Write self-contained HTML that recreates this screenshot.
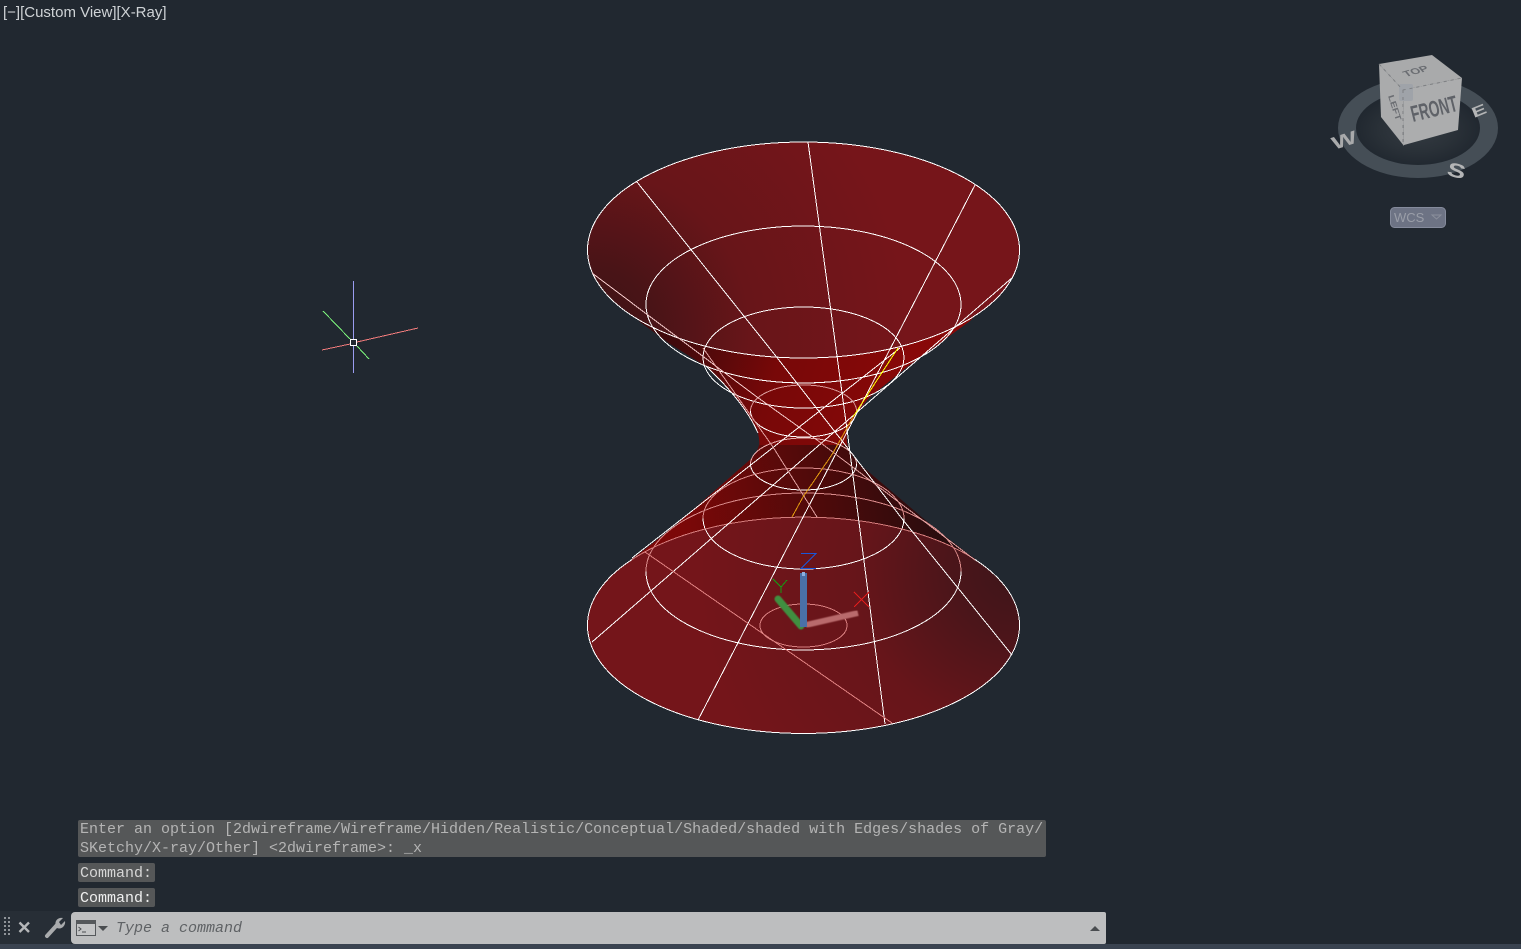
<!DOCTYPE html>
<html><head><meta charset="utf-8"><style>
html,body{margin:0;padding:0;width:1521px;height:949px;overflow:hidden;background:#212830}
.abs{position:absolute}
.m{font-family:"Liberation Mono",monospace;font-size:15px;line-height:19px;white-space:pre}
</style></head><body>
<svg class="abs" style="left:0;top:0" width="1521" height="949" viewBox="0 0 1521 949" xmlns="http://www.w3.org/2000/svg">
<defs>
<radialGradient id="top" gradientUnits="userSpaceOnUse" cx="590" cy="330" r="320"><stop offset="0" stop-color="#3c1215"/><stop offset=".2" stop-color="#491417"/><stop offset=".5" stop-color="#681519"/><stop offset="1" stop-color="#76151a"/></radialGradient>
<radialGradient id="bot" gradientUnits="userSpaceOnUse" cx="1015" cy="570" r="320"><stop offset="0" stop-color="#3e1519"/><stop offset=".2" stop-color="#4b151a"/><stop offset=".5" stop-color="#67151a"/><stop offset="1" stop-color="#74151a"/></radialGradient>
<linearGradient id="throatT" gradientUnits="userSpaceOnUse" x1="680" y1="330" x2="900" y2="400"><stop offset="0" stop-color="#400a0c"/><stop offset=".45" stop-color="#780808"/><stop offset="1" stop-color="#880808"/></linearGradient>
<linearGradient id="throatB" gradientUnits="userSpaceOnUse" x1="680" y1="520" x2="930" y2="480"><stop offset="0" stop-color="#7c0808"/><stop offset=".55" stop-color="#4f0a0a"/><stop offset="1" stop-color="#2a0c0e"/></linearGradient>
<radialGradient id="glow" cx=".5" cy=".5" r=".5"><stop offset="0" stop-color="#343b42"/><stop offset=".6" stop-color="#2a3138"/><stop offset="1" stop-color="#212830"/></radialGradient>
<filter id="b" x="-20%" y="-20%" width="140%" height="140%"><feGaussianBlur stdDeviation=".6"/></filter>
<filter id="t" x="-20%" y="-20%" width="140%" height="140%"><feGaussianBlur stdDeviation=".35"/></filter>
</defs>

<!-- hourglass fill -->
<path d="M620 300L640 322L670 344L707 367Q745 403 758 433Q760 441 759 447L848 447Q846 440 847 433Q856 412 870 397L907 367L970 321L990 300Z" fill="url(#throatT)"/>
<path d="M759 445Q757 452 753 457L670 530L632 559L600 620L1010 620L975 559L937 530L857 462Q849 452 848 445Z" fill="url(#throatB)"/>
<ellipse cx="803.5" cy="250" rx="216" ry="108" fill="url(#top)"/>
<ellipse cx="803.5" cy="625.5" rx="216" ry="108" fill="url(#bot)"/>

<g fill="none" stroke="#fff" stroke-width="1" shape-rendering="crispEdges">
<!-- rings -->
<ellipse cx="803.5" cy="250" rx="216" ry="108"/>
<ellipse cx="803.5" cy="304.5" rx="157.5" ry="78.5"/>
<ellipse cx="803.5" cy="357.5" rx="100.5" ry="50.5"/>
<path d="M750.500 411a53 26 0 0 0 106 0"/>
<path d="M750.500 411a53 26 0 0 1 106 0" stroke="#d99a9a"/>
<path d="M750.500 464a53 26 0 0 0 106 0"/>
<path d="M750.500 464a53 26 0 0 1 106 0" stroke="#e8b0b0"/>
<path d="M703 518.500a100.500 50.500 0 0 0 201 0"/>
<path d="M703 518.500a100.500 50.500 0 0 1 201 0" stroke="#d98a8a"/>
<path d="M646 571.500a157.500 78.500 0 0 0 315 0"/>
<path d="M646 571.500a157.500 78.500 0 0 1 315 0" stroke="#d98a8a"/>
<path d="M587.500 625.500a216 108 0 0 0 432 0"/>
<path d="M587.500 625.500A216 108 0 0 1 632 559.500M975 559.500A216 108 0 0 1 1019.500 625.500"/>
<path d="M632 559.500A216 108 0 0 1 975 559.500" stroke="#d47c7c"/>
<ellipse cx="803.5" cy="625.5" rx="43.5" ry="21.5" stroke="#d98080"/>
<!-- rulings -->
<path d="M808 142L848 437L885 724"/>
<path d="M637 182L775 355L857 460L903 520L958 588L1012 655"/>
<path d="M975 185L698 720"/>
<path d="M592 642L1013 277"/>
<path d="M592 273L757 397L817 440" stroke="#f2c8c8"/>
<path d="M817 440L975 560" stroke="#dfa0a0"/>
<path d="M645 552L892 723" stroke="#e08282"/>
<path d="M632 558L900 348"/>
<path d="M703 348L773 447L817 517" stroke="#e0a0a0"/>
<path d="M707 367Q745 403 758 433"/>
<path d="M898 348L866 397L853 417" stroke="#ffff00"/>
<path d="M853 417L833 453L803 497L792 517" stroke="#e29a10"/>
</g>

<!-- crosshair -->
<g shape-rendering="crispEdges" fill="none">
<path d="M353.5 281V339M353.5 346V373" stroke="#9a9cf0"/>
<path d="M323 311L350 339M357 346L369 359" stroke="#7cf57c"/>
<path d="M322 350L350 344M357 342L418 328" stroke="#f27c7c"/>
<rect x="350.5" y="339.5" width="6" height="6" stroke="#fff"/>
</g>

<!-- UCS -->
<g fill="none">
<path d="M778 599L801 626" stroke="#3f8f3f" stroke-width="7" stroke-linecap="round" filter="url(#b)"/>
<path d="M806 625L858 613" stroke="#b96a6c" stroke-width="6" filter="url(#b)"/>
<rect x="800" y="573" width="7" height="54" fill="#4a70a8"/>
<rect x="802" y="572" width="3" height="4" fill="#8db0e0"/>
<g shape-rendering="crispEdges">
<path d="M801 553.500H816L801 568.500H816" stroke="#1a56d8"/>
<path d="M773 579L781 587L787 580M781 587V593" stroke="#12a012"/>
<path d="M854 592L869 607M869 592L854 607" stroke="#e21c1c"/>
</g>
</g>

<!-- ViewCube -->
<ellipse cx="1418" cy="130" rx="62" ry="36" fill="url(#glow)"/>
<path fill-rule="evenodd" d="M1338 128a80 50 0 1 0 160 0a80 50 0 1 0-160 0ZM1356 128a62 37 0 1 1 124 0a62 37 0 1 1-124 0Z" fill="#454e56"/>
<polygon points="1379,64 1432,55 1462,78 1403,90" fill="#a9aaab"/>
<polygon points="1379,64 1403,90 1404,146 1381,117" fill="#aaabac"/>
<polygon points="1403,90 1462,78 1458,130 1404,145" fill="#acadae"/>
<rect x="1399" y="84" width="14" height="17" rx="2" fill="#9fa3a9"/>
<path d="M1379 64L1403 90L1462 78M1403 90V146" stroke="#7d7f82" stroke-width="1" stroke-dasharray="3 4" fill="none"/>
<g font-family="Liberation Sans,sans-serif" font-weight="bold" filter="url(#t)">
<text transform="translate(1413 122) rotate(-14) scale(.72 1.2)" font-size="19" fill="#5f6268">FRONT</text>
<text transform="translate(1406 77) rotate(-16) skewX(24) scale(1.15 .85)" font-size="10.500" fill="#6b6d72">TOP</text>
<text transform="translate(1388 96) rotate(72) scale(1 .8)" font-size="10.500" fill="#6b6d72">LEFT</text>
<text transform="translate(1334 150) rotate(-18) scale(1.5 1)" font-size="18" fill="#a9aaab">W</text>
<text transform="translate(1446 175) rotate(14) scale(1.25 .9)" font-size="22" fill="#b4b5b6">S</text>
<text transform="translate(1474 118) rotate(-22) scale(1.3 .85)" font-size="17" fill="#b4b5b6">E</text>
</g>

<!-- WCS -->
<rect x="1390.500" y="207.500" width="55" height="20" rx="4" fill="#6d7384" stroke="#858b9c"/>
<text x="1394" y="222" font-family="Liberation Sans,sans-serif" font-size="13" fill="#9a9ea8">WCS</text>
<path d="M1432 215H1441L1436.500 219Z" fill="none" stroke="#8a8f9b"/>

<!-- command bar chrome -->
<rect x="0" y="911" width="71" height="33" fill="#272e36"/>
<rect x="0" y="944" width="1521" height="5" fill="#3a4350"/>
<g fill="#8f9499">
<rect x="4" y="917" width="2" height="2"/><rect x="8" y="917" width="2" height="2"/>
<rect x="4" y="921" width="2" height="2"/><rect x="8" y="921" width="2" height="2"/>
<rect x="4" y="925" width="2" height="2"/><rect x="8" y="925" width="2" height="2"/>
<rect x="4" y="929" width="2" height="2"/><rect x="8" y="929" width="2" height="2"/>
<rect x="4" y="933" width="2" height="2"/><rect x="8" y="933" width="2" height="2"/>
</g>
<path d="M19.500 922.500L29 932M29 922.500L19.500 932" stroke="#b5b7b9" stroke-width="2.400" fill="none"/>
<path d="M47 936L57 925" stroke="#a9abad" stroke-width="4" stroke-linecap="round"/>
<path d="M56 926C54 921 58 917 63 918L59 922L61 925L65 921C66 926 61 930 57 928Z" fill="#a9abad"/>
<path d="M71 916a4 4 0 0 1 4-4H1104a2 2 0 0 1 2 2V942a2 2 0 0 1-2 2H75a4 4 0 0 1-4-4Z" fill="#bdbebf"/>
<rect x="76.500" y="920.500" width="19" height="15" fill="#c4c5c6" stroke="#55585b"/>
<rect x="76" y="920" width="20" height="4" fill="#55585b"/>
<path d="M78.500 927L81 929L78.500 931M82 932H86" stroke="#4a4d50" fill="none"/>
<path d="M98 926H108L103 931Z" fill="#4a4d50"/>
<path d="M1090 931H1100L1095 926Z" fill="#4a4d50"/>
</svg>

<div class="abs" style="left:3px;top:3px;font:15px/19px 'Liberation Sans',sans-serif;color:#cfd3d6;white-space:pre">[−][Custom View][X-Ray]</div>

<div class="abs" style="left:78px;top:820px;width:968px;height:37px;background:#555758;border-radius:2px"></div>
<div class="abs m" style="left:80px;top:820px;color:#b4b4b4">Enter an option [2dwireframe/Wireframe/Hidden/Realistic/Conceptual/Shaded/shaded with Edges/shades of Gray/
SKetchy/X-ray/Other] &lt;2dwireframe&gt;: _x</div>
<div class="abs" style="left:78px;top:863px;width:77px;height:19px;background:#555758;border-radius:2px"></div>
<div class="abs m" style="left:80px;top:864px;color:#d6d6d6">Command:</div>
<div class="abs" style="left:78px;top:888px;width:77px;height:19px;background:#555758;border-radius:2px"></div>
<div class="abs m" style="left:80px;top:889px;color:#efefef">Command:</div>
<div class="abs m" style="left:116px;top:919px;color:#5f6265;font-style:italic">Type a command</div>
</body></html>
